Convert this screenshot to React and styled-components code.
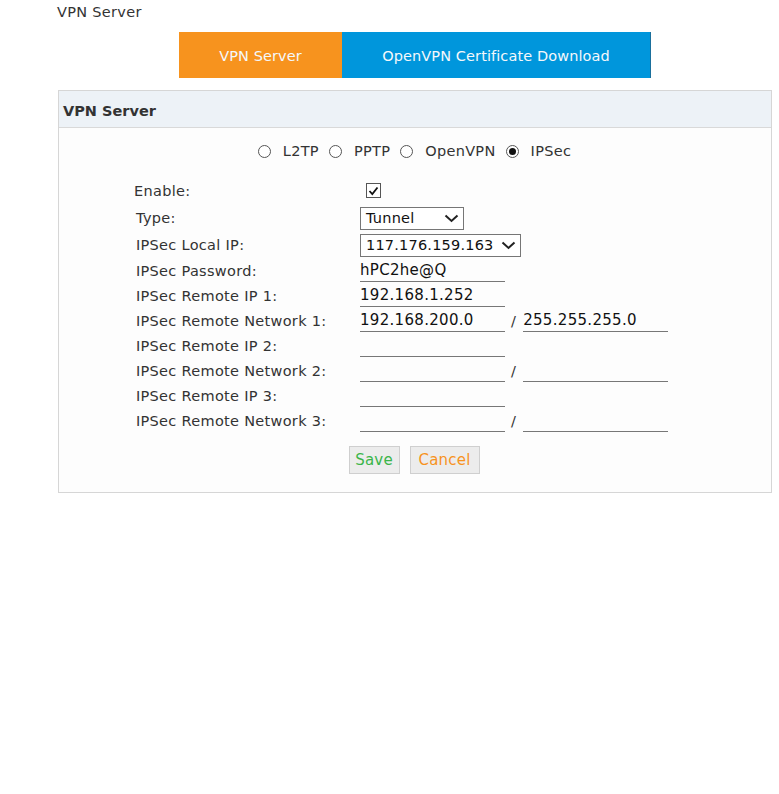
import React from "react";
import styled, { createGlobalStyle } from "styled-components";

const Global = createGlobalStyle`
  html, body { margin: 0; padding: 0; background: #ffffff; }
  body {
    font-family: "DejaVu Sans", Verdana, sans-serif;
    font-size: 14.5px;
    letter-spacing: 0.3px;
    color: #333;
  }
`;

const Page = styled.div`
  width: 714px;
  padding: 4px 0 0 58px;
`;

const PageTitle = styled.div`
  margin-left: -1px;
  height: 16px;
  line-height: 16px;
  color: #333;
`;

const Tabs = styled.div`
  display: flex;
  justify-content: center;
  margin-top: 12px;
`;

const Tab = styled.div`
  height: 46px;
  line-height: 48px;
  color: #f4f8fb;
  letter-spacing: 0.1px;
  background: ${(p) => (p.$active ? "#f7931e" : "#0096dc")};
  border-right: ${(p) => (p.$active ? "none" : "1px solid #1a6f9c")};
  text-align: center;
  width: ${(p) => p.$w}px;
  box-sizing: border-box;
`;

const Panel = styled.div`
  margin-top: 12px;
  border: 1px solid #d6d6d6;
  background: #fdfdfd;
  height: 403px;
  box-sizing: border-box;
`;

const PanelHeader = styled.div`
  height: 36px;
  line-height: 40px;
  padding-left: 4px;
  background: #edf2f7;
  border-bottom: 1px solid #d9d9d9;
  font-weight: bold;
  letter-spacing: 0;
  color: #333;
`;

const RadioRow = styled.div`
  display: flex;
  justify-content: center;
  align-items: center;
  height: 22px;
  margin-top: 12px;
  padding-right: 1px;
`;

const RadioItem = styled.label`
  display: flex;
  align-items: center;
  margin-right: 10px;
  &:last-child { margin-right: 0; }
`;

const RadioCircle = styled.span`
  width: 11px;
  height: 11px;
  border: 1px solid #555;
  border-radius: 50%;
  margin-right: 12px;
  display: flex;
  align-items: center;
  justify-content: center;
  background: #fff;
  &::after {
    content: "";
    width: 7px;
    height: 7px;
    border-radius: 50%;
    background: ${(p) => (p.$checked ? "#111" : "transparent")};
  }
`;

const Form = styled.div`
  margin-top: 15px;
  padding-left: 77px;
`;

const Row = styled.div`
  display: grid;
  grid-template-columns: 224px auto;
  align-items: center;
  height: ${(p) => p.$h || 25}px;
`;

const Label = styled.div`
  color: #333;
  margin-left: ${(p) => (p.$shift ? -2 : 0)}px;
`;

const Controls = styled.div`
  display: flex;
  align-items: center;
`;

const Check = styled.span`
  width: 13px;
  height: 13px;
  margin-left: 6px;
  border: 1px solid #555;
  background: #fff;
  display: flex;
  align-items: center;
  justify-content: center;
`;

const Select = styled.div`
  display: flex;
  align-items: center;
  justify-content: space-between;
  height: 23px;
  width: ${(p) => p.$w}px;
  box-sizing: border-box;
  border: 1px solid #767676;
  padding: 0 4px 0 5px;
  background: #fff;
  color: #111;
  letter-spacing: 0.2px;
`;

const TextInput = styled.div`
  width: 145px;
  height: 21px;
  line-height: 21px;
  border-bottom: 1px solid #777;
  color: #111;
  font-size: 15px;
  white-space: nowrap;
`;

const Slash = styled.span`
  margin: 0 7px 0 6px;
  color: #333;
`;

const Buttons = styled.div`
  display: flex;
  justify-content: center;
  gap: 10px;
  margin-top: 13px;
  padding-right: 2px;
`;

const Button = styled.button`
  height: 28px;
  width: ${(p) => p.$w}px;
  padding: 0;
  border: 1px solid #cfcfcf;
  background: #ececec;
  color: ${(p) => p.$color};
  font-family: inherit;
  font-size: 15px;
  letter-spacing: 0.2px;
`;

const Chevron = () => (
  <svg width="15" height="9" viewBox="0 0 15 9">
    <path d="M1.5 1.5 L7.5 7 L13.5 1.5" fill="none" stroke="#222" strokeWidth="2" />
  </svg>
);

const Tick = () => (
  <svg width="11" height="10" viewBox="0 0 11 10">
    <path d="M1.5 5 L4.3 8 L9.5 1.5" fill="none" stroke="#111" strokeWidth="1.8" />
  </svg>
);

const rows = [
  { label: "IPSec Password:", a: "hPC2he@Q" },
  { label: "IPSec Remote IP 1:", a: "192.168.1.252" },
  { label: "IPSec Remote Network 1:", a: "192.168.200.0", b: "255.255.255.0" },
  { label: "IPSec Remote IP 2:", a: "" },
  { label: "IPSec Remote Network 2:", a: "", b: "" },
  { label: "IPSec Remote IP 3:", a: "" },
  { label: "IPSec Remote Network 3:", a: "", b: "" },
];

export default function App() {
  return (
    <>
      <Global />
      <Page>
        <PageTitle>VPN Server</PageTitle>
        <Tabs>
          <Tab $active $w={163}>VPN Server</Tab>
          <Tab $w={309}>OpenVPN Certificate Download</Tab>
        </Tabs>
        <Panel>
          <PanelHeader>VPN Server</PanelHeader>
          <RadioRow>
            {["L2TP", "PPTP", "OpenVPN", "IPSec"].map((n) => (
              <RadioItem key={n}>
                <RadioCircle $checked={n === "IPSec"} />
                {n}
              </RadioItem>
            ))}
          </RadioRow>
          <Form>
            <Row $h={27}>
              <Label $shift>Enable:</Label>
              <Controls>
                <Check><Tick /></Check>
              </Controls>
            </Row>
            <Row $h={28}>
              <Label>Type:</Label>
              <Controls>
                <Select $w={104}>Tunnel<Chevron /></Select>
              </Controls>
            </Row>
            <Row $h={26}>
              <Label>IPSec Local IP:</Label>
              <Controls>
                <Select $w={161}>117.176.159.163<Chevron /></Select>
              </Controls>
            </Row>
            {rows.map((r) => (
              <Row key={r.label}>
                <Label>{r.label}</Label>
                <Controls>
                  <TextInput>{r.a}</TextInput>
                  {r.b !== undefined && (
                    <>
                      <Slash>/</Slash>
                      <TextInput>{r.b}</TextInput>
                    </>
                  )}
                </Controls>
              </Row>
            ))}
          </Form>
          <Buttons>
            <Button $color="#3bb54a" $w={51}>Save</Button>
            <Button $color="#f7931e" $w={70}>Cancel</Button>
          </Buttons>
        </Panel>
      </Page>
    </>
  );
}
